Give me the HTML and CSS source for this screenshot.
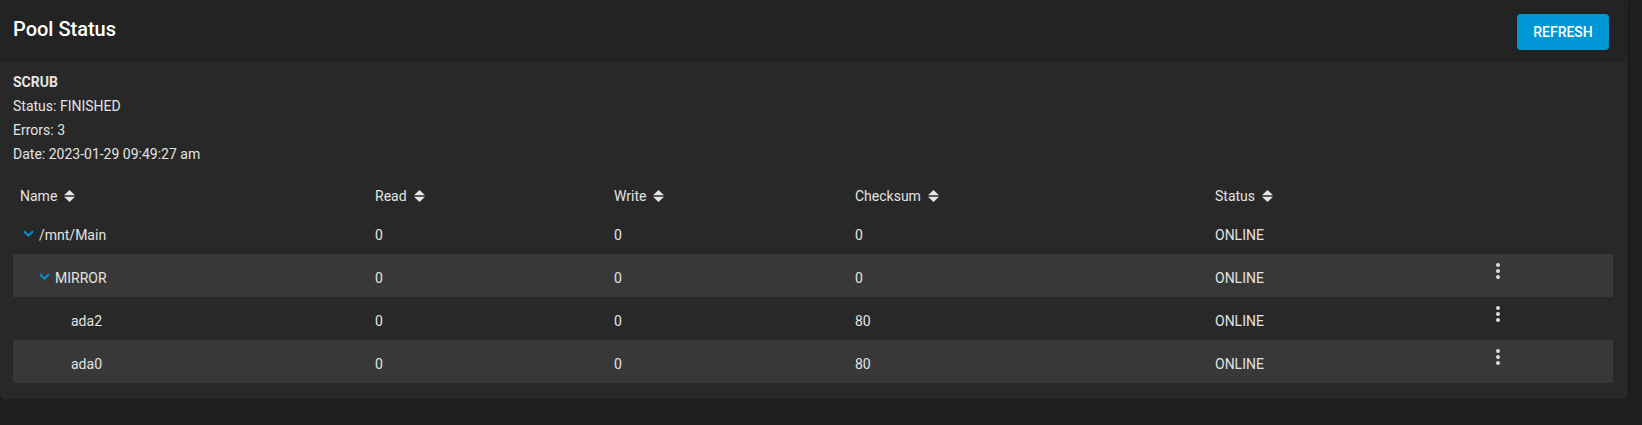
FILE: index.html
```html
<!DOCTYPE html>
<html>
<head>
<meta charset="utf-8">
<link rel="stylesheet" href="styles.css">
</head>
<body>
<div class="card">
  <div class="card-header">
    <h1 class="title">Pool Status</h1>
    <button class="btn">REFRESH</button>
  </div>
  <div class="card-body">
    <div class="scrub">
      <div class="scrub-title">SCRUB</div>
      <div class="line">Status: FINISHED</div>
      <div class="line">Errors: 3</div>
      <div class="line">Date: 2023-01-29 09:49:27 am</div>
    </div>
    <div class="table">
      <div class="row head">
        <div class="cell c-name">Name <span class="sort"><svg width="11" height="12" viewBox="0 0 11 12"><path d="M0 5.2L5.5 0L11 5.2Z M0 6.8L5.5 12L11 6.8Z" fill="#e6e6e6"/></svg></span></div>
        <div class="cell">Read <span class="sort"><svg width="11" height="12" viewBox="0 0 11 12"><path d="M0 5.2L5.5 0L11 5.2Z M0 6.8L5.5 12L11 6.8Z" fill="#e6e6e6"/></svg></span></div>
        <div class="cell">Write <span class="sort"><svg width="11" height="12" viewBox="0 0 11 12"><path d="M0 5.2L5.5 0L11 5.2Z M0 6.8L5.5 12L11 6.8Z" fill="#e6e6e6"/></svg></span></div>
        <div class="cell">Checksum <span class="sort"><svg width="11" height="12" viewBox="0 0 11 12"><path d="M0 5.2L5.5 0L11 5.2Z M0 6.8L5.5 12L11 6.8Z" fill="#e6e6e6"/></svg></span></div>
        <div class="cell">Status <span class="sort"><svg width="11" height="12" viewBox="0 0 11 12"><path d="M0 5.2L5.5 0L11 5.2Z M0 6.8L5.5 12L11 6.8Z" fill="#e6e6e6"/></svg></span></div>
        <div class="cell"></div>
      </div>
      <div class="row">
        <div class="cell c-name lvl0"><span class="chev"><svg width="11" height="7" viewBox="0 0 11 7"><path d="M1 1.2L5.5 5.6L10 1.2" stroke="#0095d5" stroke-width="2" fill="none"/></svg></span>/mnt/Main</div>
        <div class="cell">0</div>
        <div class="cell">0</div>
        <div class="cell">0</div>
        <div class="cell">ONLINE</div>
        <div class="cell"></div>
      </div>
      <div class="row alt">
        <div class="cell c-name lvl1"><span class="chev"><svg width="11" height="7" viewBox="0 0 11 7"><path d="M1 1.2L5.5 5.6L10 1.2" stroke="#0095d5" stroke-width="2" fill="none"/></svg></span>MIRROR</div>
        <div class="cell">0</div>
        <div class="cell">0</div>
        <div class="cell">0</div>
        <div class="cell">ONLINE</div>
        <div class="cell act"><span class="kebab"><i></i><i></i><i></i></span></div>
      </div>
      <div class="row">
        <div class="cell c-name lvl2">ada2</div>
        <div class="cell">0</div>
        <div class="cell">0</div>
        <div class="cell">80</div>
        <div class="cell">ONLINE</div>
        <div class="cell act"><span class="kebab"><i></i><i></i><i></i></span></div>
      </div>
      <div class="row alt">
        <div class="cell c-name lvl2">ada0</div>
        <div class="cell">0</div>
        <div class="cell">0</div>
        <div class="cell">80</div>
        <div class="cell">ONLINE</div>
        <div class="cell act"><span class="kebab"><i></i><i></i><i></i></span></div>
      </div>
    </div>
  </div>
</div>
</body>
</html>
```
FILE: styles.css
```css
html, body {
  margin: 0;
  padding: 0;
  background: #1e1e1e;
  font-family: Roboto, "Liberation Sans", sans-serif;
  color: #e3e3e3;
}
.card {
  width: 1628px;
  background: #282828;
  border-radius: 0 0 4px 4px;
  box-shadow: 0 1px 2px rgba(0,0,0,0.6);
}
.card-header {
  height: 62px;
  background: #232323;
  display: flex;
  align-items: center;
  justify-content: space-between;
  padding: 0 19px 0 13px;
}
.title {
  margin: 0;
  font-size: 20px;
  font-weight: 500;
  color: #ffffff;
  padding-bottom: 4px;
}
.btn {
  width: 92px;
  height: 36px;
  border: none;
  border-radius: 4px;
  background: #0095d5;
  color: #ffffff;
  font-family: Roboto, "Liberation Sans", sans-serif;
  font-weight: 500;
  font-size: 14px;
  padding: 0;
  margin-top: 1px;
}
.card-body {
  padding: 8px 15px 16px 13px;
}
.scrub {
  font-size: 14px;
  line-height: 24px;
}
.scrub-title {
  font-weight: 700;
}
.table {
  margin-top: 12px;
}
.row {
  display: grid;
  grid-template-columns: 362px 239px 241px 360px 268px 130px;
  height: 43px;
  padding-top: 4px;
  box-sizing: border-box;
  align-items: center;
  font-size: 14px;
}
.row.head {
  height: 33px;
  align-items: start;
  padding-top: 10px;
}
.row.alt {
  background: #383838;
}
.cell {
  display: flex;
  align-items: center;
  white-space: nowrap;
}
.c-name {
  padding-left: 7px;
}
.sort {
  display: inline-flex;
  margin-left: 7px;
}
.lvl0 {
  padding-left: 10px;
}
.lvl1 {
  padding-left: 26px;
}
.lvl2 {
  padding-left: 58px;
}
.chev {
  display: inline-flex;
  width: 16px;
  padding-bottom: 2px;
}
.act {
  justify-content: flex-start;
  padding-left: 13px;
  align-self: start;
  padding-top: 5px;
}
.kebab {
  display: flex;
  flex-direction: column;
  gap: 2px;
}
.kebab i {
  display: block;
  width: 4px;
  height: 4px;
  border-radius: 50%;
  background: #dcdcdc;
}
```
